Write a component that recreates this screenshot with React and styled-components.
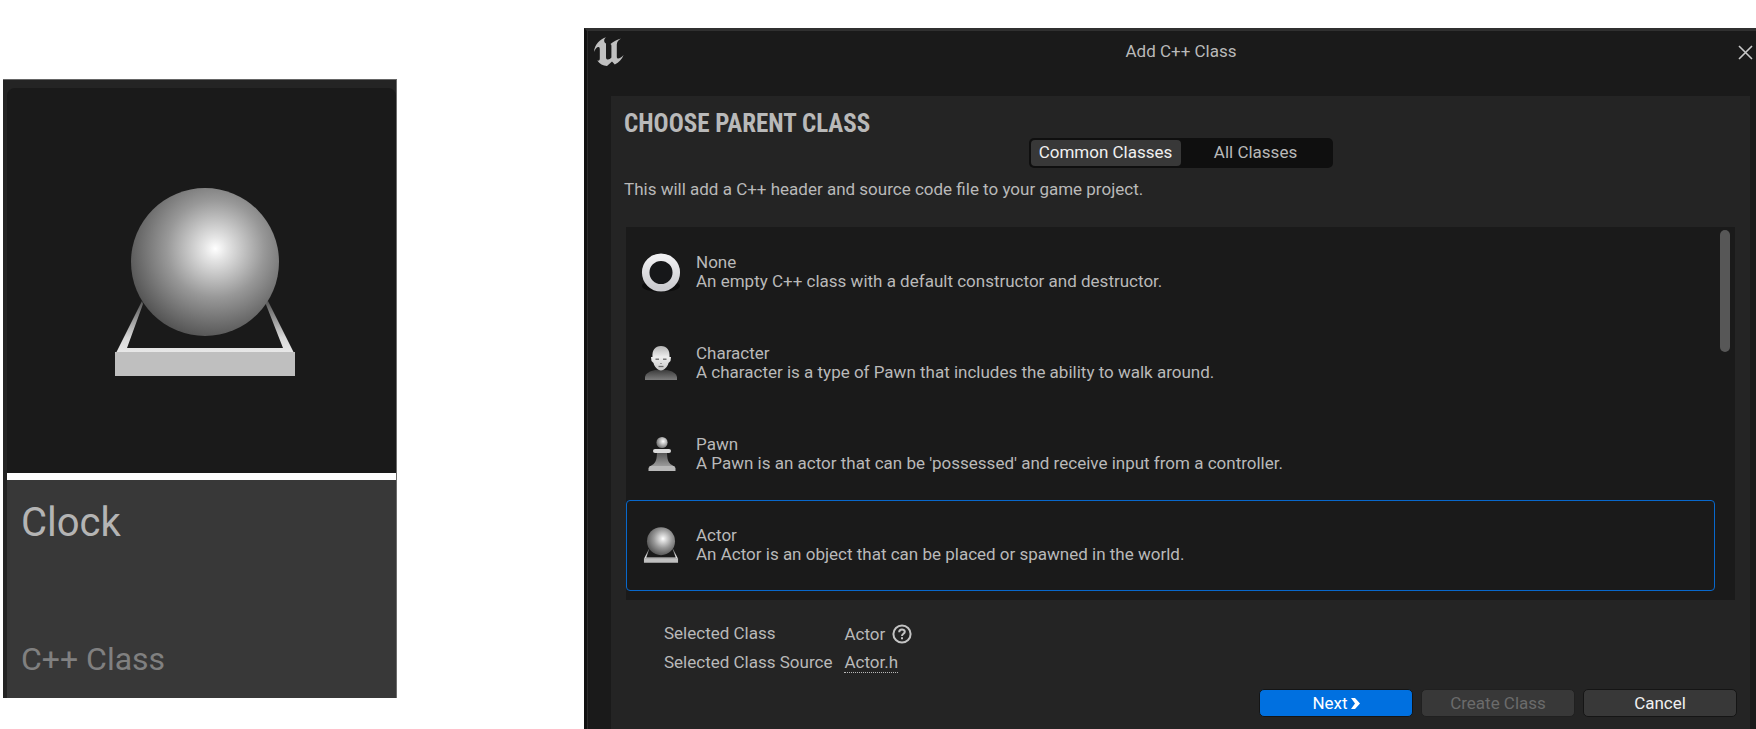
import React, { useState } from "react";
import styled, { createGlobalStyle, css } from "styled-components";

const GlobalStyle = createGlobalStyle`
  * { box-sizing: border-box; }
  body {
    margin: 0;
    background: #ffffff;
    color: #b9b9b9;
    font-family: Roboto, "Liberation Sans", sans-serif;
    font-size: 17px;
    line-height: 19px;
  }
  button { font: inherit; cursor: pointer; }
`;

const Page = styled.main`
  display: grid;
  grid-template-columns: minmax(300px, 394fr) minmax(600px, 1172fr);
  column-gap: 187px;
  align-items: start;
  padding-left: 3px;
`;

const AssetCard = styled.article`
  margin-top: 79px;
  padding: 8px 0 0 4px;
  background: #242424;
  border-top: 1px solid #666666;
  border-right: 1px solid #6c6c6c;
`;

const Thumbnail = styled.div`
  display: flex;
  align-items: flex-end;
  justify-content: center;
  height: 385px;
  padding: 0 0 96px 7px;
  background: #1a1a1a;
  border-radius: 8px 8px 0 0;
`;

const AssetInfo = styled.div`
  display: flex;
  flex-direction: column;
  justify-content: space-between;
  height: 225px;
  padding: 21px 14px;
  background: #383838;
  border-top: 7px solid #ffffff;
`;

const AssetName = styled.h2`
  margin: 0;
  font-size: 40px;
  font-weight: 400;
  line-height: 44px;
  color: #b4b4b4;
`;

const AssetType = styled.p`
  margin: 0;
  font-size: 32px;
  line-height: 36px;
  color: #808080;
`;

const Dialog = styled.section`
  display: flex;
  flex-direction: column;
  min-height: 701px;
  margin-top: 28px;
  padding: 0 6px 0 24px;
  background: #1a1a1a;
  border-top: 3px solid #303030;
  border-left: 3px solid #111111;
  box-shadow: inset 1px 0 #2c2c2c;
`;

const TitleBar = styled.header`
  display: grid;
  grid-template-columns: 30px 1fr 15px;
  align-items: start;
  height: 65px;
  margin: 0 -6px 0 -24px;
  padding: 6px 3px 0 7px;
`;

const DialogTitle = styled.h1`
  margin: 5px 0 0;
  font-size: 17px;
  font-weight: 400;
  line-height: 19px;
  text-align: center;
`;

const CloseButton = styled.button`
  display: flex;
  justify-self: end;
  margin-top: 8px;
  padding: 0;
  background: none;
  border: 0;
  color: #c8c8c8;
`;

const Panel = styled.div`
  flex: 1;
  display: flex;
  flex-direction: column;
  padding: 14px 15px 12px;
  background: #242424;
`;

const Heading = styled.h2`
  margin: 0 -2px;
  font-family: "Roboto Condensed", Roboto, sans-serif;
  font-size: 25px;
  font-weight: 700;
  line-height: 28px;
`;

const Segmented = styled.div`
  display: flex;
  align-self: center;
  width: 304px;
  padding: 2px;
  background: #0f0f0f;
  border-radius: 5px;
`;

const Segment = styled.button`
  flex: 1;
  height: 26px;
  padding: 0 0 1px;
  border: 0;
  border-radius: 4px;
  background: ${(p) => (p.$active ? "#383838" : "transparent")};
  color: ${(p) => (p.$active ? "#f0f0f0" : "#b9b9b9")};
`;

const Intro = styled.p`
  margin: 12px -2px 28px;
`;

const ClassList = styled.div`
  display: flex;
  justify-content: space-between;
  align-items: flex-start;
  padding-bottom: 9px;
  padding-right: 5px;
  background: #1a1a1a;
`;

const Rows = styled.ul`
  flex: 1;
  margin: 0;
  padding: 0;
  list-style: none;
`;

const Row = styled.button`
  display: flex;
  align-items: center;
  gap: 15px;
  width: 100%;
  height: 91px;
  padding: 0 14px 2px;
  text-align: left;
  color: inherit;
  background: none;
  border: 1px solid ${(p) => (p.$selected ? "#0868cc" : "transparent")};
  border-radius: 4px;
`;

const RowText = styled.span`
  display: flex;
  flex-direction: column;
`;

const ScrollThumb = styled.div`
  width: 10px;
  height: 122px;
  margin: 3px 0 0 5px;
  background: #575757;
  border-radius: 5px;
`;

const Details = styled.dl`
  display: grid;
  grid-template-columns: auto auto;
  row-gap: 9px;
  column-gap: 12px;
  justify-content: start;
  margin: 24px 0 0 38px;
`;

const Term = styled.dt`
  white-space: nowrap;
`;

const Value = styled.dd`
  display: flex;
  align-items: center;
  gap: 7px;
  height: 20px;
  margin: 0;
`;

const SourceLink = styled.a`
  color: inherit;
  text-decoration: none;
  border-bottom: 1px dotted #b9b9b9;
`;

const HelpButton = styled.button`
  display: flex;
  padding: 0;
  border: 0;
  background: none;
  color: #c4c4c4;
`;

const Actions = styled.footer`
  display: flex;
  justify-content: flex-end;
  gap: 8px;
  margin: auto -2px 0 0;
`;

const ActionButton = styled.button`
  display: flex;
  align-items: center;
  justify-content: center;
  gap: 3px;
  width: 154px;
  height: 28px;
  padding: 0;
  border: 1px solid #151515;
  border-radius: 5px;
  background: #383838;
  color: #f0f0f0;
  ${(p) => p.$primary && css`background: #0070e0; color: #ffffff;`}
  &:disabled { color: #6b6b6b; border-color: #202020; cursor: default; }
`;

function ActorIcon({ size, id }) {
  return (
    <svg width={size} height={size} viewBox="0 0 180 190" aria-hidden="true">
      <defs>
        <radialGradient id={id} cx="0.57" cy="0.41" r="0.66">
          <stop offset="0" stopColor="#ffffff" />
          <stop offset="0.12" stopColor="#e4e4e4" />
          <stop offset="0.5" stopColor="#989898" />
          <stop offset="1" stopColor="#484848" />
        </radialGradient>
        <linearGradient id={id + "-rail"} x1="0" y1="0" x2="0" y2="1">
          <stop offset="0" stopColor="#555555" />
          <stop offset="0.7" stopColor="#d8d8d8" />
          <stop offset="1" stopColor="#e8e8e8" />
        </linearGradient>
      </defs>
      <path d="M27 114 1 166h178l-26-52-3 1 18 46H12l16-44z" fill={`url(#${id}-rail)`} />
      <path d="M0 165h180v24H0z" fill="#bfbfbf" />
      <circle cx="90" cy="75" r="74" fill={`url(#${id})`} />
    </svg>
  );
}

function UnrealIcon() {
  return (
    <svg width="30" height="30" viewBox="0 0 30 30" fill="#c0c0c0" aria-hidden="true">
      <path d="M12.3.3C6 2 .5 7.5 0 15c1.5-3.5 3-5.2 4.6-5 1 .2 1.2 1 1.2 2.5v9c0 2-1 2.5-2.5 2.1C5.500 27 9 29 13 29l5-4.400 2.800 3C25 25.500 28 22 29.600 18c-2.100 2.200-4.100 3.600-5.800 3.400-.8-.2-1-.8-1-1.900v-12c0-2.700 1.700-4.500 4.200-6-4 1-7.500 3-10.500 5.500.7.6.9 1 .9 2v11.500c-1 1.300-2.400 2.100-3.900 1.900-1.100-.2-1.500-1-1.500-2.400V6.500c-1.200-.7-2-1.900-1.800-3.300.1-1.200 1-2.200 2.100-2.900z" />
    </svg>
  );
}

function NoneIcon() {
  return (
    <svg width="40" height="40" viewBox="0 0 40 40" aria-hidden="true">
      <defs>
        <linearGradient id="ring" x1="0" y1="0" x2="0" y2="1">
          <stop offset="0" stopColor="#f0f0f2" />
          <stop offset="1" stopColor="#cbcbcf" />
        </linearGradient>
      </defs>
      <ellipse cx="20" cy="34" rx="19" ry="6" fill="#0c0c0c" />
      <circle cx="20" cy="20.500" r="15.300" fill="#161719" stroke="url(#ring)" strokeWidth="7.500" />
    </svg>
  );
}

function CharacterIcon() {
  return (
    <svg width="40" height="40" viewBox="0 0 40 40" aria-hidden="true">
      <defs>
        <linearGradient id="bust" x1="0" y1="0" x2="0" y2="1">
          <stop offset="0" stopColor="#3c3c3c" />
          <stop offset="1" stopColor="#7c7c7c" />
        </linearGradient>
        <linearGradient id="face" x1="0" y1="0" x2="0" y2="1">
          <stop offset="0" stopColor="#b4b4b4" />
          <stop offset="0.45" stopColor="#eeeeee" />
          <stop offset="1" stopColor="#c8c8c8" />
        </linearGradient>
      </defs>
      <path d="M4 37v-3c1-4 5-6 10-7h12c5 1 9 3 10 7v3z" fill="url(#bust)" />
      <path d="M20 3c-6 0-9 4-8.500 11l-1.500 0 .5 4 2 2c1 4 4 7 7.500 7.500 3.500-.5 6.500-3.500 7.500-7.500l2-2 .5-4h-1.500C29 7 26 3 20 3z" fill="url(#face)" />
      <path d="M14.500 15.500h3.500v1.500h-3.500zM22 15.500h3.500v1.500H22z" fill="#777777" />
      <path d="M19 20.500h2" stroke="#9a9a9a" />
      <path d="M17.500 23.500h5" stroke="#6c6c6c" strokeWidth="1.300" />
    </svg>
  );
}

function PawnIcon() {
  return (
    <svg width="40" height="40" viewBox="0 0 40 40" aria-hidden="true">
      <defs>
        <radialGradient id="pawn-head" cx="0.6" cy="0.4" r="0.6">
          <stop offset="0" stopColor="#ffffff" />
          <stop offset="1" stopColor="#747474" />
        </radialGradient>
        <linearGradient id="pawn-stem" x1="0" y1="0" x2="0" y2="1">
          <stop offset="0" stopColor="#4c4c4c" />
          <stop offset="1" stopColor="#a0a0a0" />
        </linearGradient>
      </defs>
      <path d="M16 17h10c0 8 1 12 5 14l3 2H8l3-2c4-2 5-6 5-14z" fill="url(#pawn-stem)" />
      <path d="M9 32h24l1.500 2v3h-27v-3z" fill="#b8b8b8" />
      <rect x="12" y="15" width="18" height="4" rx="2" fill="#dadada" />
      <circle cx="21" cy="8.500" r="5.600" fill="url(#pawn-head)" />
    </svg>
  );
}

const IconSlot = styled.span`
  display: flex;
  align-items: center;
  justify-content: center;
  width: 40px;
  height: 40px;
`;

const classes = [
  { name: "None", text: "An empty C++ class with a default constructor and destructor.", icon: <NoneIcon /> },
  { name: "Character", text: "A character is a type of Pawn that includes the ability to walk around.", icon: <CharacterIcon /> },
  { name: "Pawn", text: "A Pawn is an actor that can be 'possessed' and receive input from a controller.", icon: <PawnIcon /> },
  { name: "Actor", text: "An Actor is an object that can be placed or spawned in the world.", icon: <ActorIcon size={36} id="actor-small" /> },
];

export default function App() {
  const [selected, setSelected] = useState("Actor");
  const [tab, setTab] = useState("Common Classes");
  return (
    <>
      <GlobalStyle />
      <Page>
        <AssetCard>
          <Thumbnail><ActorIcon size={190} id="actor-large" /></Thumbnail>
          <AssetInfo>
            <AssetName>Clock</AssetName>
            <AssetType>C++ Class</AssetType>
          </AssetInfo>
        </AssetCard>
        <Dialog>
          <TitleBar>
            <UnrealIcon />
            <DialogTitle>Add C++ Class</DialogTitle>
            <CloseButton aria-label="Close">
              <svg width="15" height="15" viewBox="0 0 15 15" stroke="currentColor" strokeWidth="1.6"><path d="M1 1l13 13M14 1 1 14" /></svg>
            </CloseButton>
          </TitleBar>
          <Panel>
            <Heading>CHOOSE PARENT CLASS</Heading>
            <Segmented>
              {["Common Classes", "All Classes"].map((t) => (
                <Segment key={t} $active={t === tab} onClick={() => setTab(t)}>{t}</Segment>
              ))}
            </Segmented>
            <Intro>This will add a C++ header and source code file to your game project.</Intro>
            <ClassList>
              <Rows>
                {classes.map((c) => (
                  <li key={c.name}>
                    <Row $selected={c.name === selected} onClick={() => setSelected(c.name)}>
                      <IconSlot>{c.icon}</IconSlot>
                      <RowText><span>{c.name}</span><span>{c.text}</span></RowText>
                    </Row>
                  </li>
                ))}
              </Rows>
              <ScrollThumb />
            </ClassList>
            <Details>
              <Term>Selected Class</Term>
              <Value>
                Actor
                <HelpButton aria-label="Help">
                  <svg width="20" height="20" viewBox="0 0 20 20" fill="none" stroke="currentColor" strokeWidth="2">
                    <circle cx="10" cy="10" r="8.6" />
                    <path d="M7.2 8.2c0-3.6 5.6-3.4 5.6-.4 0 2-2.8 2-2.8 4.2M10 13.2v2" />
                  </svg>
                </HelpButton>
              </Value>
              <Term>Selected Class Source</Term>
              <Value><SourceLink href="#actor">Actor.h</SourceLink></Value>
            </Details>
            <Actions>
              <ActionButton $primary>
                Next
                <svg width="9" height="11" viewBox="0 0 9 11" fill="currentColor" aria-hidden="true"><path d="M0 0h4l5 5.5L4 11H0l4-5.5z" /></svg>
              </ActionButton>
              <ActionButton disabled>Create Class</ActionButton>
              <ActionButton>Cancel</ActionButton>
            </Actions>
          </Panel>
        </Dialog>
      </Page>
    </>
  );
}
